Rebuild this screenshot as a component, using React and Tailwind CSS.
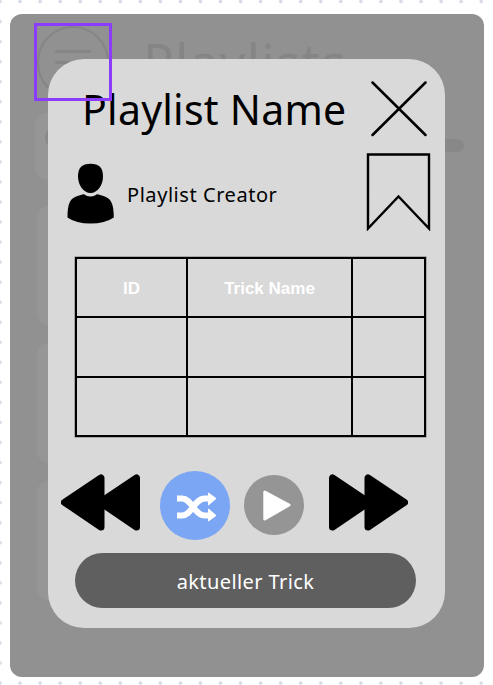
function RewindIcon({ className }) {
  return (
    <svg viewBox="0 0 79 57" className={className} fill="#000" stroke="#000" strokeWidth="7" strokeLinejoin="round">
      <path d="M3.5 28.3 40 4V53Z" />
      <path d="M39 28.3 75.5 4V53Z" />
    </svg>
  );
}

function PersonIcon() {
  return (
    <svg viewBox="0 0 47 61" className="h-[61px] w-[47px]" fill="#000">
      <path d="M23.5 .7C32 .7 36 4.5 36 13.5C36 22 30.500 30 23.500 30S11 22 11 13.500C11 4.500 15 .7 23.500 .7Z" />
      <path d="M15.500 31.500Q17.500 31 18.500 32.200Q23.500 34.800 28.500 32.200Q29.500 31 31.500 31.500L36.500 33C43.500 35 46.800 40 46.800 54.500Q38 60.600 23.500 60.600T.5 54.500C.5 40 3.500 35 10.500 33Z" />
    </svg>
  );
}

function Backdrop() {
  return (
    <div className="h-full w-full text-[#858585]">
      <div className="flex h-[99px] pl-[27px] pt-3">
        <div className="flex h-[73px] w-[72px] flex-col items-center gap-[8px] rounded-full border-2 border-current pt-[22px]">
          <div className="h-[3px] w-[36px] rounded-full bg-current" />
          <div className="h-[3px] w-[36px] rounded-full bg-current" />
          <div className="h-[3px] w-[36px] rounded-full bg-current" />
        </div>
        <div className="pl-[34px] pt-[5px] text-[51px] leading-[60px] tracking-[1.300px]">Playlists</div>
      </div>
      <div className="flex items-center">
        <div className="ml-[25px] h-[67px] w-[300px] rounded-xl bg-[#969696] pl-[10px] pt-[12px]">
          <div className="h-[25px] w-[25px] rounded-full border-[3px] border-[#898989]" />
        </div>
        <div className="mb-[3px] ml-[30px] h-[13px] w-[99px] rounded-full bg-[#888888]" />
      </div>
      <div className="flex flex-col gap-[18px] pl-[27px] pt-[26px]">
        <div className="h-[119px] w-[380px] rounded-xl bg-[#969696]" />
        <div className="h-[120px] w-[380px] rounded-xl bg-[#969696]" />
        <div className="h-[119px] w-[380px] rounded-xl bg-[#969696]" />
      </div>
    </div>
  );
}

function PlaylistDialog() {
  return (
    <div className="absolute left-[38px] top-[45px] h-[569px] w-[397px] rounded-[36px] bg-[#d9d9d9] text-black">
      <div className="flex h-[94px] items-start pl-[34px]">
        <h1 className="w-[289px] whitespace-nowrap pt-[20px] text-[41px] font-normal leading-[60px] tracking-[0.250px]">Playlist Name</h1>
        <svg viewBox="0 0 56 56" className="mt-[22px] h-[56px] w-[56px]" stroke="#000" strokeWidth="2.500" strokeLinecap="round">
          <path d="M1.500 1.500 54.500 54M54.500 1.500 1.500 54" />
        </svg>
      </div>
      <div className="flex h-[104px] items-start pl-[19px]">
        <div className="pt-[10px]"><PersonIcon /></div>
        <div className="ml-[13px] w-[239px] whitespace-nowrap pt-[28px] text-[20px] leading-[28px] tracking-[0.550px]">Playlist Creator</div>
        <svg viewBox="0 0 66 78" className="h-[78px] w-[66px]" fill="none" stroke="#000" strokeWidth="2.400">
          <path d="M2 1.500H63V75.500L32.500 43.500 2 75.500Z" />
        </svg>
      </div>
      <div className="ml-[27px] grid w-[351px] grid-cols-[109px_163px_71px] grid-rows-[57px_58px_57px] gap-[2px] bg-black p-[2px] font-['Liberation_Sans',sans-serif] text-[17px] font-bold text-white shadow-[0_0_0_0.500px_#777]">
        <div className="flex items-center justify-center bg-[#d9d9d9] pt-[2px]">ID</div>
        <div className="flex items-center justify-center bg-[#d9d9d9] pt-[2px]">Trick Name</div>
        <div className="bg-[#d9d9d9]" />
        <div className="bg-[#d9d9d9]" />
        <div className="bg-[#d9d9d9]" />
        <div className="bg-[#d9d9d9]" />
        <div className="bg-[#d9d9d9]" />
        <div className="bg-[#d9d9d9]" />
        <div className="bg-[#d9d9d9]" />
      </div>
      <div className="flex h-[116px] items-start pl-[13px] pt-[34px]">
        <RewindIcon className="mt-[3px] h-[57px] w-[79px]" />
        <div className="ml-5 flex h-[69px] w-[70px] items-center justify-center rounded-full bg-[#7ba6f4]">
          <svg viewBox="0 0 41 30" className="ml-[2px] mt-[2px] h-[30px] w-[41px]" fill="none" stroke="#fff" strokeWidth="6" strokeLinejoin="round">
            <path d="M1 6.500H6C16 6.500 18 23.500 29 23.500H34" />
            <path d="M1 23.500H6C16 23.500 18 6.500 29 6.500H34" />
            <path d="M32.500 1 40 6.500 32.500 13ZM32.500 17 40 23.500 32.500 29Z" fill="#fff" strokeWidth="1" />
          </svg>
        </div>
        <div className="ml-[14px] mt-[4px] flex h-[60px] w-[60px] items-center justify-center rounded-full bg-[#959595]">
          <svg viewBox="0 0 28 31" className="ml-[5px] h-[31px] w-[28px]" fill="#fff" stroke="#fff" strokeWidth="3" strokeLinejoin="round">
            <path d="M1.800 2 26 15 1.800 29Z" />
          </svg>
        </div>
        <RewindIcon className="ml-[25px] mt-[3px] h-[57px] w-[79px] -scale-x-100" />
      </div>
      <div className="ml-[27px] flex h-[55px] w-[341px] items-center justify-center rounded-full bg-[#5f5f5f] pt-[2px] text-[20px] tracking-[0.400px] text-white">
        aktueller Trick
      </div>
    </div>
  );
}

export default function App() {
  return (
    <div className="h-[685px] w-[493px] overflow-hidden bg-white bg-[radial-gradient(circle_at_50%_50%,#d5dae5_1.700px,transparent_2.100px)] bg-[length:20.060px_20.060px] bg-[position:-10px_-8.500px] pl-[10px] pt-[14px] font-['Noto_Sans','Open_Sans',sans-serif]">
      <div className="relative h-[663px] w-[474px] rounded-xl bg-[#919191]">
        <Backdrop />
        <PlaylistDialog />
        <div className="absolute left-[24px] top-[9px] h-[78px] w-[78px] border-[3px] border-[#8b3dff]" />
      </div>
    </div>
  );
}
